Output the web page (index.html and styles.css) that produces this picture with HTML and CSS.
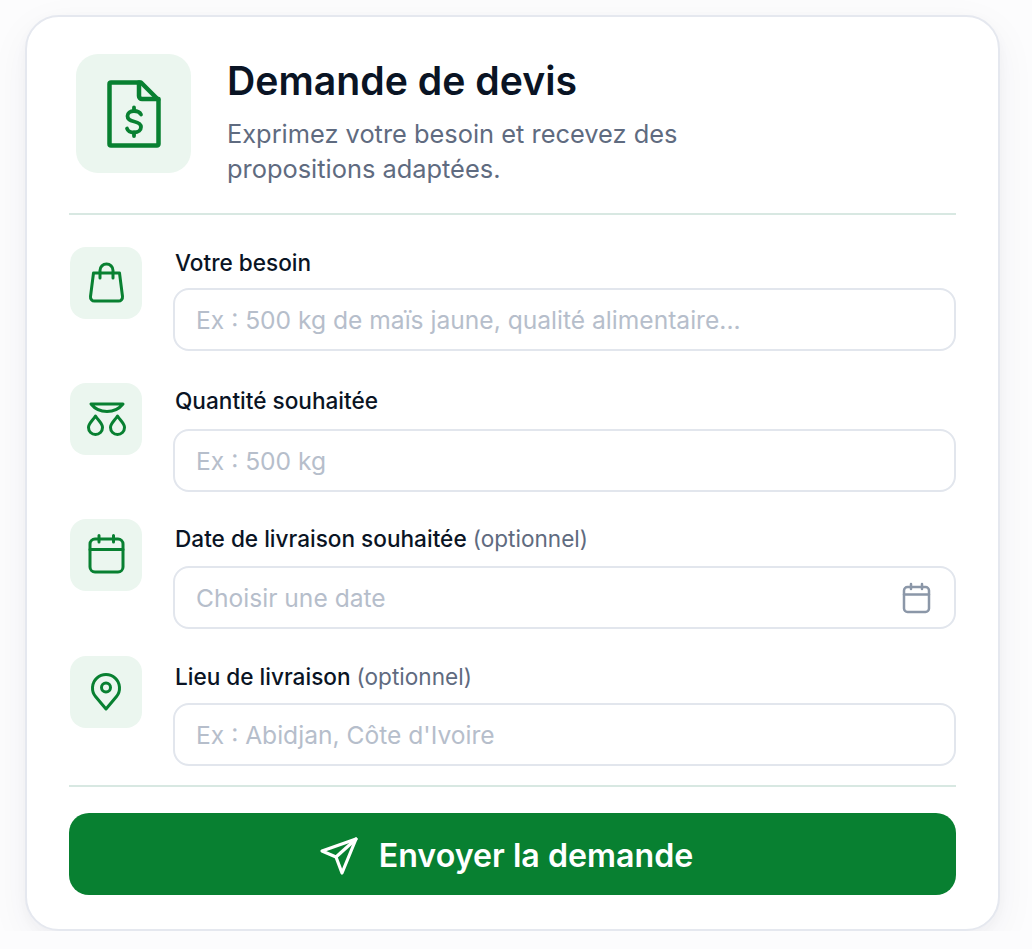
FILE: index.html
```html
<!DOCTYPE html>
<html lang="fr">
<head>
  <meta charset="UTF-8">
  <title>Demande de devis</title>
  <link rel="stylesheet" href="styles.css">
</head>
<body>
  <div class="card">
    <div class="header">
      <div class="header-icon">
        <svg width="54" height="68" viewBox="0 0 54 68" fill="none" stroke="#088031" stroke-width="4.500" stroke-linejoin="round" stroke-linecap="round">
          <path d="M4 2.500H34L51.500 20V64A1.500 1.500 0 0 1 50 65.500H4A1.500 1.500 0 0 1 2.500 64V4A1.500 1.500 0 0 1 4 2.500Z"/>
          <path d="M32 2.500V16A3 3 0 0 0 35 19H51.500"/>
          <path d="M34 34.500C33 32.500 31 31 27 31C23 31 20.500 33 20.500 36C20.500 39.500 23.500 40.700 27 41.500C30.500 42.300 34 43.500 34 47C34 50 31.500 52.500 27 52.500C23 52.500 20.800 51 20 48.500" stroke-width="3.800"/>
          <path d="M27 27.500V31M27 52.500V56" stroke-width="3.800"/>
        </svg>
      </div>
      <div class="header-text">
        <h1>Demande de devis</h1>
        <p>Exprimez votre besoin et recevez des<br>propositions adaptées.</p>
      </div>
    </div>

    <div class="field field-1">
      <div class="field-icon">
        <svg width="72" height="72" viewBox="0 0 72 72" fill="none" stroke="#088031" stroke-width="3" stroke-linecap="round" stroke-linejoin="round">
          <path d="M23.500 26H49.500L52.500 49.500A4 4 0 0 1 48.500 54H24.500A4 4 0 0 1 20.500 49.500Z"/>
          <path d="M30 31V23.500A6.500 6.500 0 0 1 43 23.500V31"/>
        </svg>
      </div>
      <div class="field-body">
        <label>Votre besoin</label>
        <input type="text" placeholder="Ex : 500 kg de maïs jaune, qualité alimentaire...">
      </div>
    </div>

    <div class="field field-2">
      <div class="field-icon">
        <svg width="72" height="72" viewBox="0 0 72 72" fill="none" stroke="#088031" stroke-width="3" stroke-linecap="round" stroke-linejoin="round">
          <path d="M21 21H53C49 26 43 28.500 37 28.500C31 28.500 25 26 21 21Z"/>
          <path d="M25.500 33C22 38.500 18.500 40.500 18.500 44.500A7 7 0 0 0 32.500 44.500C32.500 40.500 29 38.500 25.500 33Z"/>
          <path d="M47.500 33C44 38.500 40.500 40.500 40.500 44.500A7 7 0 0 0 54.500 44.500C54.500 40.500 51 38.500 47.500 33Z"/>
        </svg>
      </div>
      <div class="field-body">
        <label>Quantité souhaitée</label>
        <input type="text" placeholder="Ex : 500 kg">
      </div>
    </div>

    <div class="field field-3">
      <div class="field-icon">
        <svg width="72" height="72" viewBox="0 0 72 72" fill="none" stroke="#088031" stroke-width="3" stroke-linecap="round" stroke-linejoin="round">
          <rect x="20" y="20" width="33" height="33" rx="5"/>
          <path d="M20 30.500H53M29 16.500V23M43.500 16.500V23"/>
        </svg>
      </div>
      <div class="field-body">
        <label>Date de livraison souhaitée <span>(optionnel)</span></label>
        <div class="input-wrap">
          <input type="text" placeholder="Choisir une date">
          <svg class="input-icon" width="30" height="32" viewBox="0 0 30 32" fill="none" stroke="#8b97a8" stroke-width="2.500" stroke-linecap="round" stroke-linejoin="round">
            <rect x="2" y="5" width="25" height="25" rx="3.500"/>
            <path d="M2 12.500H27M9 2V7M20 2V7"/>
          </svg>
        </div>
      </div>
    </div>

    <div class="field field-4">
      <div class="field-icon">
        <svg width="72" height="72" viewBox="0 0 72 72" fill="none" stroke="#088031" stroke-width="3" stroke-linecap="round" stroke-linejoin="round">
          <path d="M36 53L25.500 40.500A13.500 13.500 0 1 1 46.500 40.500Z"/>
          <circle cx="36" cy="31.500" r="4.500"/>
        </svg>
      </div>
      <div class="field-body">
        <label>Lieu de livraison <span>(optionnel)</span></label>
        <input type="text" placeholder="Ex : Abidjan, Côte d'Ivoire">
      </div>
    </div>

    <div class="footer">
      <button type="button">
        <svg width="40" height="40" viewBox="0 0 40 40" fill="none" stroke="#fff" stroke-width="3.200" stroke-linecap="round" stroke-linejoin="round">
          <path d="M37 3L3 15L17 21L23 37Z"/>
          <path d="M17 21L37 3"/>
        </svg>
        Envoyer la demande
      </button>
    </div>
  </div>
</body>
</html>
```

FILE: styles.css
```css
body {
  margin: 0;
  background: #fcfcfd;
  font-family: Inter, "Liberation Sans", sans-serif;
  color: #0a1424;
}
.card {
  box-sizing: border-box;
  width: 975px;
  height: 916px;
  margin: 15px 0 0 25px;
  padding: 37px 42px 0;
  background: #fff;
  border: 2px solid #e5e8ef;
  border-radius: 34px;
  box-shadow: 0 4px 12px rgba(30, 40, 70, 0.03), 0 12px 40px rgba(30, 40, 70, 0.05);
}
.header {
  display: flex;
  gap: 36px;
  height: 159px;
  padding-left: 7px;
  border-bottom: 2px solid #d8e8e2;
  margin-bottom: 32px;
}
.header-icon {
  display: flex;
  align-items: center;
  justify-content: center;
  width: 115px;
  height: 119px;
  background: #ebf6ef;
  border-radius: 22px;
}
.header-text h1 {
  margin: 4px 0 12px;
  font-size: 39.200px;
  line-height: 46px;
  font-weight: 600;
}
.header-text p {
  margin: 0;
  font-size: 25.400px;
  line-height: 35px;
  color: #5f6b80;
}
.field {
  display: flex;
  gap: 31px;
  padding-left: 1px;
}
.field-1 { margin-bottom: 32px; }
.field-2 { margin-bottom: 27px; }
.field-3 { margin-bottom: 27px; }
.field-4 { margin-bottom: 19px; }
.field-icon {
  flex: none;
  width: 72px;
  height: 72px;
  background: #ebf6ef;
  border-radius: 16px;
}
.field-body {
  flex: 1;
}
.field-1 .field-body { padding-top: 4px; }
.field-2 .field-body { padding-top: 6px; }
.field-3 .field-body { padding-top: 8px; }
.field-4 .field-body { padding-top: 9px; }
label {
  display: block;
  margin-left: 2px;
  font-size: 22.600px;
  line-height: 24px;
  font-weight: 500;
}
label span {
  font-weight: 400;
  color: #5f6b80;
}
.field-1 label { margin-bottom: 13px; }
.field-2 label { margin-bottom: 16px; }
.field-3 label { margin-bottom: 15px; }
.field-4 label { margin-bottom: 14px; }
input {
  display: block;
  box-sizing: border-box;
  width: 100%;
  height: 63px;
  padding: 0 21px;
  background: #fff;
  border: 2px solid #e2e6ed;
  border-radius: 16px;
  font-family: inherit;
  font-size: 24.600px;
  color: #0a1424;
}
input::placeholder {
  color: #b6becb;
  opacity: 1;
}
.input-wrap {
  position: relative;
}
.input-icon {
  position: absolute;
  top: 16px;
  right: 24px;
}
.footer {
  border-top: 2px solid #d8e8e2;
  padding-top: 26px;
}
button {
  display: flex;
  align-items: center;
  justify-content: center;
  gap: 20px;
  width: 100%;
  height: 82px;
  padding: 3px 13px 0 0;
  background: #088031;
  border: none;
  border-radius: 20px;
  font-family: inherit;
  font-size: 32.200px;
  font-weight: 600;
  color: #fff;
  cursor: pointer;
}
```
